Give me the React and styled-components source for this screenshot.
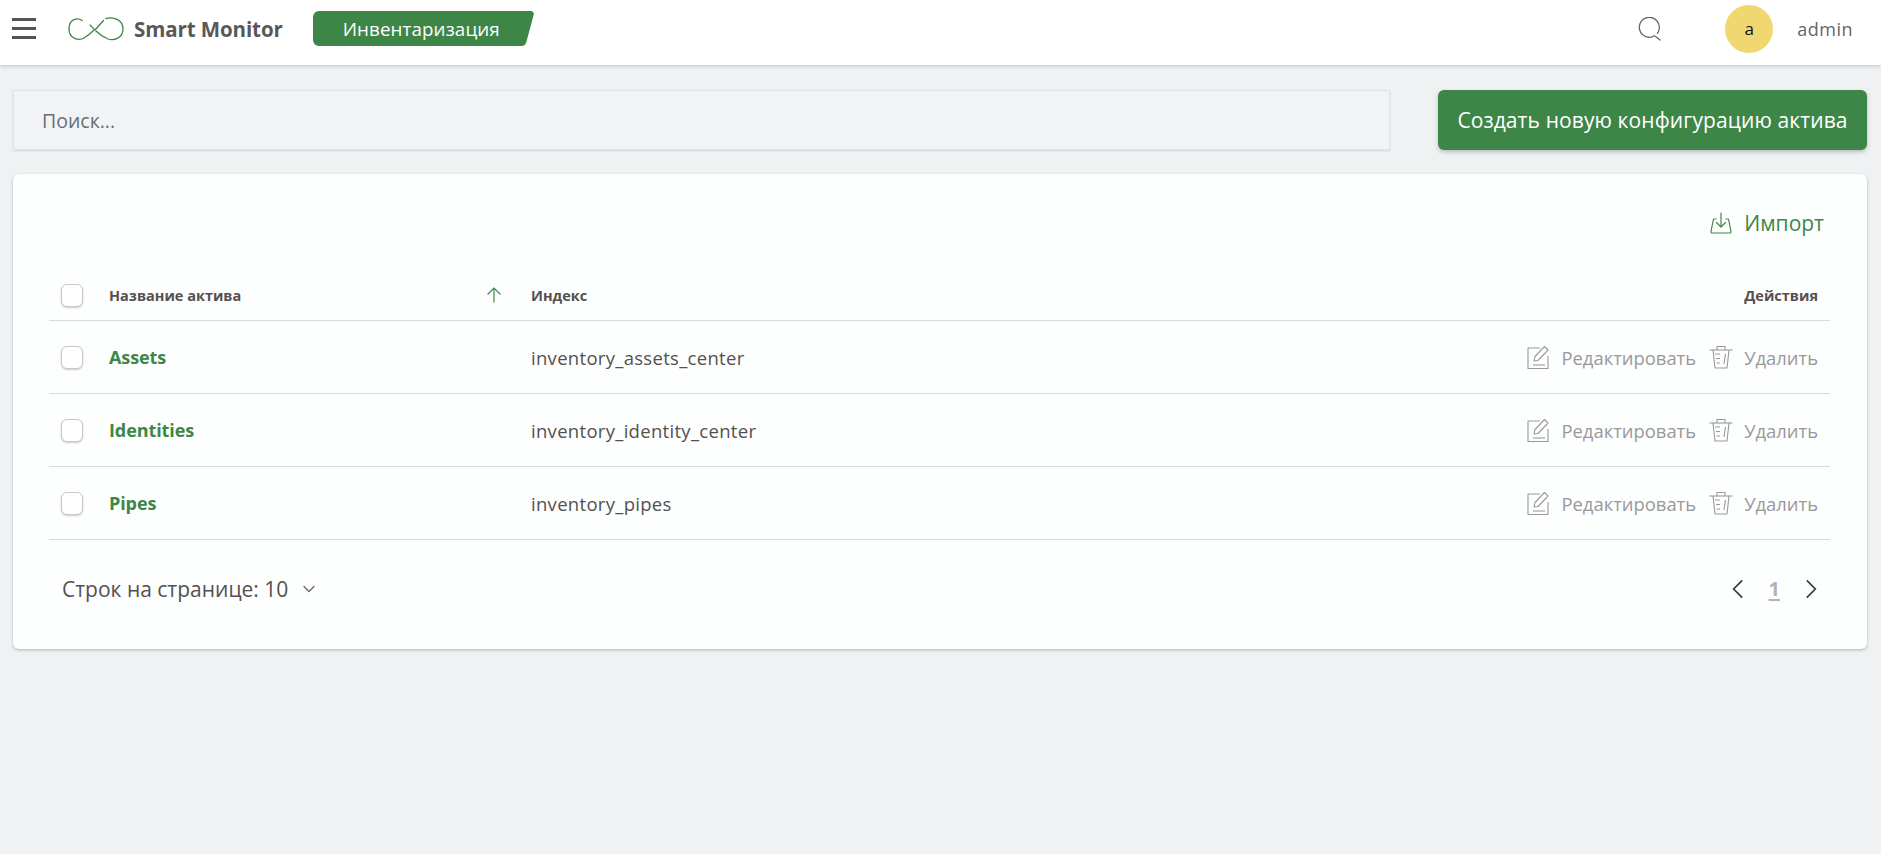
import React from "react";
import styled, { createGlobalStyle } from "styled-components";

const GREEN = "#3e8647";

const Global = createGlobalStyle`
  html, body { margin: 0; padding: 0; }
  body {
    background: #f0f1f3;
    font-family: "Open Sans", "Noto Sans", sans-serif;
    color: #55504f;
  }
`;

const rows = [
  { name: "Assets", index: "inventory_assets_center" },
  { name: "Identities", index: "inventory_identity_center" },
  { name: "Pipes", index: "inventory_pipes" },
];

function Logo() {
  return (
    <svg width="56" height="24" viewBox="0 0 56 24" fill="none" stroke={GREEN} strokeWidth="1.3" strokeLinecap="round">
      <path d="M14 3.500C10 .5 1 1.500 1 12c0 10 10 12 15 9 4-2.500 7-5 9.500-7.500" />
      <path d="M38 1.500C46-.5 55 3 55 12s-9 12-15 10c-5-2-9-5-12-8" />
      <path d="M22 8l5 5 8.500-9.500" />
    </svg>
  );
}

function SearchIcon() {
  return (
    <svg width="24" height="24" viewBox="0 0 24 24" fill="none" stroke="#666" strokeWidth="1.3" strokeLinecap="round">
      <path d="M16.500 18.800A10 10 0 1 1 21.200 11.800a10 10 0 0 1-1.700 4.600" />
      <path d="M17.500 19.500l4.500 3.500" />
    </svg>
  );
}

function ImportIcon() {
  return (
    <svg width="24" height="24" viewBox="0 0 24 24" fill="none" stroke={GREEN} strokeWidth="1.2" strokeLinecap="round" strokeLinejoin="round">
      <path d="M7 8H4.500L2 20.500A1.300 1.300 0 0 0 3.300 22h17.400a1.300 1.300 0 0 0 1.300-1.500L19.500 8H17" />
      <path d="M12 2v14M7.500 11.500L12 16l4.500-4.500" />
    </svg>
  );
}

function EditIcon() {
  return (
    <svg width="24" height="26" viewBox="0 0 24 26" fill="none" stroke="#999" strokeWidth="1.1" strokeLinejoin="round">
      <path d="M14 4H2v20.500h20V12" />
      <path d="M8 17l1-4.500L18.500 2.500 22 6 12 16.500z" />
      <path d="M7 21h12" />
    </svg>
  );
}

function TrashIcon() {
  return (
    <svg width="24" height="26" viewBox="0 0 24 26" fill="none" stroke="#999" strokeWidth="1.1" strokeLinejoin="round">
      <path d="M0.500 6h23" />
      <path d="M8 6V2.500h8V6" />
      <path d="M4 6l2 18h12l2-18" />
      <path d="M6 10h5M7 14.500h4M7.500 19h3.500M16.500 10l-1.500 10" />
    </svg>
  );
}

function Chevron({ dir, color = "#2f3a45", size = 16 }) {
  const d = { left: "M11 1.500L4.500 8l6.500 6.500", right: "M5 1.500L11.500 8 5 14.500", down: "M3 5.500l5 5 5-5" }[dir];
  return (
    <svg width={size} height={size} viewBox="0 0 16 16" fill="none" stroke={color} strokeWidth="1.3" strokeLinecap="round">
      <path d={d} />
    </svg>
  );
}

export default function App() {
  return (
    <Page>
      <Global />
      <Header>
        <Burger>
          <span />
          <span />
          <span />
        </Burger>
        <Brand>
          <Logo />
          <BrandName>Smart Monitor</BrandName>
        </Brand>
        <Section>
          <SectionLabel>Инвентаризация</SectionLabel>
        </Section>
        <HeaderRight>
          <SearchIcon />
          <Avatar>a</Avatar>
          <UserName>admin</UserName>
        </HeaderRight>
      </Header>
      <Toolbar>
        <SearchBox placeholder="Поиск..." />
        <CreateButton>Создать новую конфигурацию актива</CreateButton>
      </Toolbar>
      <Card>
        <ImportLine>
          <ImportLink>
            <ImportIcon />
            Импорт
          </ImportLink>
        </ImportLine>
        <HeadRow>
          <Checkbox />
          <HeadName>
            Название актива
            <svg width="18" height="18" viewBox="0 0 18 18" fill="none" stroke={GREEN} strokeWidth="1.2" strokeLinecap="round">
              <path d="M9 16V2M3 8l6-6 6 6" />
            </svg>
          </HeadName>
          <HeadCell>Индекс</HeadCell>
          <HeadActions>Действия</HeadActions>
        </HeadRow>
        {rows.map((row) => (
          <Row key={row.name}>
            <Checkbox />
            <NameLink>{row.name}</NameLink>
            <IndexCell>{row.index}</IndexCell>
            <Actions>
              <Action>
                <EditIcon />
                Редактировать
              </Action>
              <Action>
                <TrashIcon />
                Удалить
              </Action>
            </Actions>
          </Row>
        ))}
        <Footer>
          <PerPage>
            Строк на странице: 10
            <Chevron dir="down" color="#666" />
          </PerPage>
          <Pager>
            <Chevron dir="left" size={20} />
            <PageNumber>1</PageNumber>
            <Chevron dir="right" size={20} />
          </Pager>
        </Footer>
      </Card>
    </Page>
  );
}

const Page = styled.div`
  min-height: 854px;
  background: #f0f1f3;
  overflow: hidden;
`;

const Header = styled.header`
  display: flex;
  align-items: center;
  height: 65px;
  box-sizing: border-box;
  padding: 0 28px 8px 12px;
  background: #fff;
  box-shadow: 0 1px 4px rgba(90, 110, 120, 0.35);
`;

const Burger = styled.div`
  display: flex;
  flex-direction: column;
  gap: 6px;
  width: 24px;

  span {
    display: block;
    height: 3px;
    background: #555;
  }
`;

const Brand = styled.div`
  display: flex;
  align-items: center;
  gap: 10px;
  margin-left: 32px;
`;

const BrandName = styled.span`
  font-size: 20.500px;
  font-weight: 700;
  letter-spacing: -0.1px;
  color: #58585a;
`;

const Section = styled.div`
  position: relative;
  z-index: 0;
  display: flex;
  align-items: center;
  width: 222px;
  height: 35px;
  margin-left: 30px;
  color: #fff;

  &::before {
    content: "";
    position: absolute;
    z-index: -1;
    top: 0;
    bottom: 0;
    left: 0;
    right: 12px;
    background: ${GREEN};
    border-radius: 6px;
  }

  &::after {
    content: "";
    position: absolute;
    z-index: -1;
    top: 0;
    bottom: 0;
    right: 5px;
    width: 30px;
    background: ${GREEN};
    border-radius: 4px;
    transform: skewX(-15deg);
  }
`;

const SectionLabel = styled.span`
  margin-left: 30px;
  font-size: 18.800px;
  letter-spacing: 0.1px;
`;

const HeaderRight = styled.div`
  display: flex;
  align-items: center;
  margin-left: auto;
`;

const Avatar = styled.div`
  display: flex;
  align-items: center;
  justify-content: center;
  width: 48px;
  height: 48px;
  margin-left: 63px;
  border-radius: 50%;
  background: #f0d76f;
  color: #111;
  font-size: 17px;
`;

const UserName = styled.span`
  margin-left: 24px;
  font-size: 18px;
  letter-spacing: 0.5px;
  color: #666;
`;

const Toolbar = styled.div`
  display: flex;
  gap: 48px;
  padding: 25px 14px 0 13px;
`;

const SearchBox = styled.input`
  flex: 1;
  min-width: 0;
  height: 60px;
  box-sizing: border-box;
  padding: 0 28px;
  background: #f2f3f5;
  border: 1px solid #dfe4e7;
  box-shadow: 0 1px 2px rgba(90, 110, 120, 0.2);
  outline: none;
  font-family: inherit;
  font-size: 19.500px;

  &::placeholder {
    color: #666e78;
    opacity: 1;
  }
`;

const CreateButton = styled.button`
  width: 429px;
  height: 60px;
  padding: 0;
  border: none;
  border-radius: 6px;
  background: ${GREEN};
  box-shadow: 0 2px 4px rgba(60, 70, 70, 0.3);
  color: #fff;
  font-family: inherit;
  font-size: 21px;
  letter-spacing: 0.1px;
`;

const Card = styled.section`
  margin: 24px 14px 0 13px;
  height: 475px;
  box-sizing: border-box;
  padding: 0 37px 0 36px;
  background: #fdfefe;
  border-radius: 6px;
  box-shadow: 0 1px 3px rgba(80, 90, 100, 0.4);
`;

const ImportLine = styled.div`
  display: flex;
  justify-content: flex-end;
  height: 96px;
  padding: 35px 6px 0 0;
  box-sizing: border-box;
`;

const ImportLink = styled.div`
  display: flex;
  align-items: center;
  align-self: flex-start;
  gap: 11px;
  color: ${GREEN};
  font-size: 21px;
`;

const baseRow = `
  display: flex;
  align-items: center;
  box-sizing: border-box;
  padding: 0 12px;
  border-bottom: 1px solid #d8dadd;
`;

const HeadRow = styled.div`
  ${baseRow}
  height: 51px;
  font-size: 14.500px;
  font-weight: 700;
  color: #55504f;
`;

const Row = styled.div`
  ${baseRow}
  height: 73px;
`;

const Checkbox = styled.span`
  flex: none;
  width: 20px;
  height: 21px;
  border: 1px solid #c9c9cb;
  border-radius: 6px;
  background: #fff;
  box-shadow: 0 1px 2px rgba(0, 0, 0, 0.2);
`;

const HeadName = styled.div`
  display: flex;
  align-items: center;
  justify-content: space-between;
  width: 394px;
  margin-left: 26px;
`;

const HeadCell = styled.div`
  margin-left: 28px;
`;

const HeadActions = styled.div`
  margin-left: auto;
`;

const NameLink = styled.a`
  width: 394px;
  margin-left: 26px;
  color: ${GREEN};
  font-size: 18px;
  font-weight: 700;
  letter-spacing: -0.1px;
`;

const IndexCell = styled.div`
  margin-left: 28px;
  font-size: 18.500px;
  letter-spacing: 0.3px;
  color: #55504f;
`;

const Actions = styled.div`
  display: flex;
  gap: 13px;
  margin-left: auto;
`;

const Action = styled.span`
  display: flex;
  align-items: center;
  gap: 11px;
  color: #999;
  font-size: 18.400px;
`;

const Footer = styled.div`
  display: flex;
  align-items: center;
  justify-content: space-between;
  height: 81px;
  box-sizing: border-box;
  padding: 16px 9px 0 13px;
`;

const PerPage = styled.div`
  display: flex;
  align-items: center;
  gap: 13px;
  font-size: 21px;
  color: #55504f;
`;

const Pager = styled.div`
  display: flex;
  align-items: center;
  gap: 21px;
`;

const PageNumber = styled.span`
  font-size: 20px;
  font-weight: 700;
  color: #b4b4b8;
  text-decoration: underline;
  text-underline-offset: 3px;
`;
